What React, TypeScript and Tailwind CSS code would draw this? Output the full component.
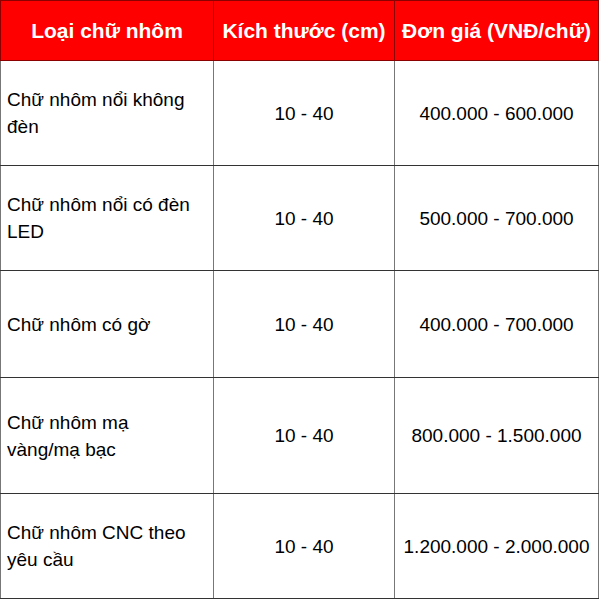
const ROWS = [
  { name: "Chữ nhôm nổi không đèn", size: "10 - 40", price: "400.000 - 600.000", h: "h-[105px]" },
  { name: "Chữ nhôm nổi có đèn LED", size: "10 - 40", price: "500.000 - 700.000", h: "h-[105px]" },
  { name: "Chữ nhôm có gờ", size: "10 - 40", price: "400.000 - 700.000", h: "h-[107px]" },
  { name: "Chữ nhôm mạ vàng/mạ bạc", size: "10 - 40", price: "800.000 - 1.500.000", h: "h-[116px]" },
  { name: "Chữ nhôm CNC theo yêu cầu", size: "10 - 40", price: "1.200.000 - 2.000.000", h: "h-[105px]" },
];

export default function App() {
  return (
    <div className="w-[600px] h-[600px] bg-white font-['Liberation_Sans',Arial,sans-serif]">
      <table className="w-[598px] table-fixed border-collapse border border-[#222]">
        <colgroup>
          <col className="w-[213px]" />
          <col className="w-[181px]" />
          <col className="w-[204px]" />
        </colgroup>
        <thead>
          <tr className="h-[60px] bg-[#fe0000] text-white text-[21px] font-bold">
            <th className="border border-[#8b0000] text-center px-0">Loại chữ nhôm</th>
            <th className="border border-[#8b0000] text-center px-0">Kích thước (cm)</th>
            <th className="border border-[#8b0000] text-center px-0">Đơn giá (VNĐ/chữ)</th>
          </tr>
        </thead>
        <tbody className="text-[19px] text-black leading-[27px]">
          {ROWS.map((r) => (
            <tr key={r.name} className={r.h}>
              <td className="border-x border-x-[#777] border-y border-y-[#333] pl-[6px] pr-[14px] text-left">
                {r.name}
              </td>
              <td className="border-x border-x-[#777] border-y border-y-[#333] text-center">{r.size}</td>
              <td className="border-x border-x-[#777] border-y border-y-[#333] text-center">{r.price}</td>
            </tr>
          ))}
        </tbody>
      </table>
    </div>
  );
}
